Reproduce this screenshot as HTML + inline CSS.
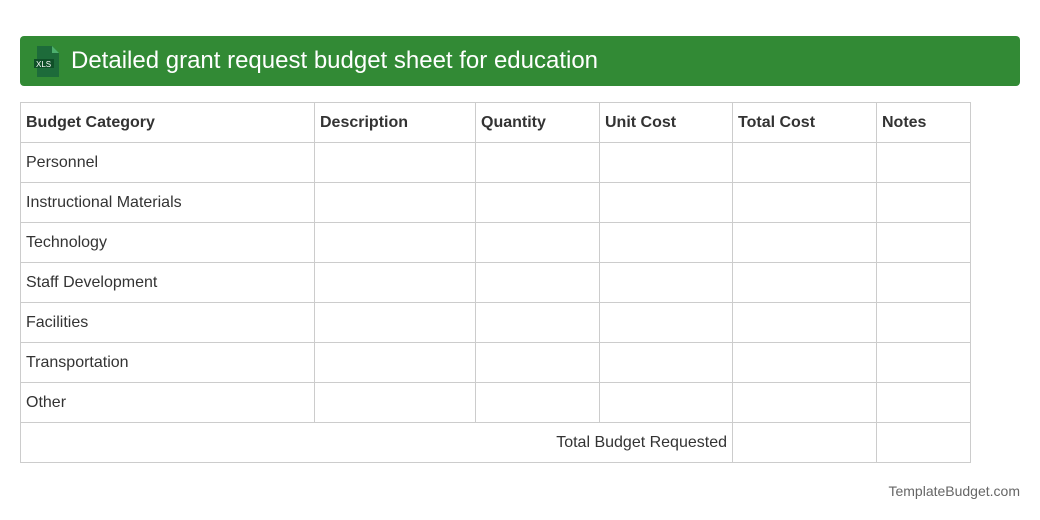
<!DOCTYPE html><html><head><style>
body{margin:0;width:1040px;height:520px;background:#fff;font-family:"Liberation Sans",Arial,sans-serif;position:relative}
.h{position:absolute;left:20px;top:36px;width:1000px;height:50px;background:#328a35;border-radius:4px}
.h span{position:absolute;left:51px;top:11px;color:#fff;font-size:24px}
table{position:absolute;left:20px;top:102px;border-collapse:collapse;font-size:16px;color:#333}
td{border:1px solid #ccc;height:40px;padding:0 5px;box-sizing:border-box}
.b td{font-weight:bold}
.f{position:absolute;right:20px;top:483px;font-size:14px;color:#666}
</style></head><body>
<div class="h"><svg style="position:absolute;left:14px;top:10px" width="26" height="31" viewBox="0 0 26 31"><path d="M3 0H18L25 7V31H3Z" fill="#1d6b3a"/><path d="M18 0V7H25Z" fill="#4caf6d"/><rect x="0" y="13" width="20" height="9" fill="#0f4f28"/><text x="2" y="21" font-size="8" fill="#fff" font-family="Liberation Sans">XLS</text></svg><span>Detailed grant request budget sheet for education</span></div>
<table>
<colgroup><col style="width:294px"><col style="width:161px"><col style="width:124px"><col style="width:133px"><col style="width:144px"><col style="width:94px"></colgroup>
<tr class="b"><td>Budget Category</td><td>Description</td><td>Quantity</td><td>Unit Cost</td><td>Total Cost</td><td>Notes</td></tr>
<tr><td>Personnel</td><td></td><td></td><td></td><td></td><td></td></tr>
<tr><td>Instructional Materials</td><td></td><td></td><td></td><td></td><td></td></tr>
<tr><td>Technology</td><td></td><td></td><td></td><td></td><td></td></tr>
<tr><td>Staff Development</td><td></td><td></td><td></td><td></td><td></td></tr>
<tr><td>Facilities</td><td></td><td></td><td></td><td></td><td></td></tr>
<tr><td>Transportation</td><td></td><td></td><td></td><td></td><td></td></tr>
<tr><td>Other</td><td></td><td></td><td></td><td></td><td></td></tr>
<tr><td colspan="4" style="text-align:right">Total Budget Requested</td><td></td><td></td></tr>
</table>
<div class="f">TemplateBudget.com</div>
</body></html>
